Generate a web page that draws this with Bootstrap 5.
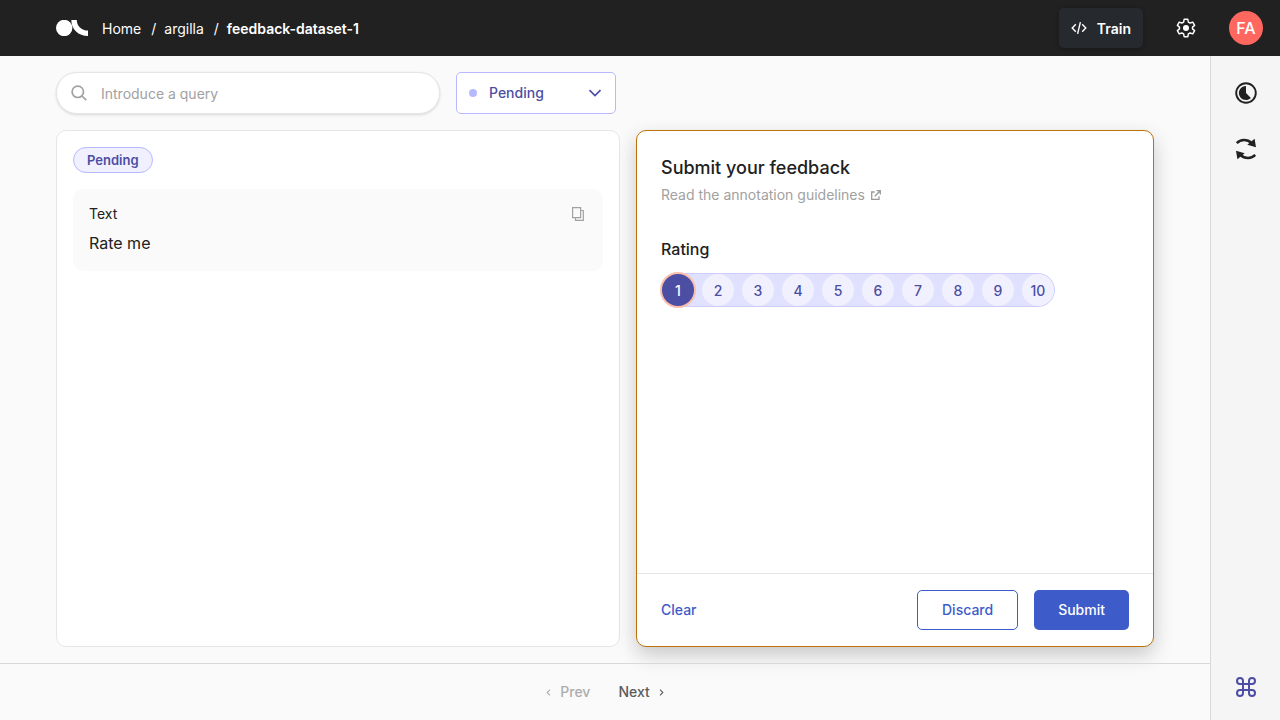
<!DOCTYPE html>
<html lang="en">
<head>
<meta charset="utf-8">
<meta name="viewport" content="width=device-width, initial-scale=1">
<title>feedback-dataset-1</title>
<link href="https://cdn.jsdelivr.net/npm/bootstrap@5.3.0/dist/css/bootstrap.min.css" rel="stylesheet">
<style>
  :root { --ink: #212121; --violet: #4c4ea3; --lilac: #b6b9ff; --blue: #3e5cc9; --line: #e6e6e6; }
  body { font-family: Inter, "Liberation Sans", sans-serif; font-size: 14px; line-height: 20px; color: var(--ink); background: #fafafa; }
  svg { display: block; flex: none; }
  .topbar { background: #212121; height: 56px; padding: 0 17px 0 56px; }
  .topbar a { color: #fff; text-decoration: none; }
  .crumbs { --bs-breadcrumb-divider-color: #fff; --bs-breadcrumb-item-padding-x: 0; margin: 2px 0 0 14px; }
  .crumbs .breadcrumb-item + .breadcrumb-item::before { padding: 0 8px 0 10px; }
  .btn-train { --bs-btn-color: #fff; --bs-btn-bg: #262a2e; --bs-btn-hover-color: #fff; --bs-btn-hover-bg: #33383d; height: 40px; font-size: 14px; line-height: 20px; font-weight: 600; padding: 0 12px; gap: 10px; border: 0; border-radius: 5px; box-shadow: 0 1px 4px rgba(0,0,0,.3); }
  .btn-train span { padding-top: 2px; }
  .avatar { width: 34px; height: 34px; background: #ff675f; font-size: 16px; font-weight: 500; }
  .side { width: 70px; background: #f5f5f5; border-left: 1px solid #d9d9d9; padding: 26px 0 22px; gap: 34px; }
  .bare { background: none; border: 0; padding: 0; }
  .work { padding: 16px 56px; gap: 16px; }
  .search { width: 384px; height: 42px; background: #fff; border: 1px solid #e6e6e6; border-radius: 21px; padding: 0 14px; gap: 14px; box-shadow: 0 1px 3px rgba(0,0,0,.14); }
  .search input { border: 0; outline: 0; background: none; font-size: 14px; min-width: 0; padding: 2px 0 0; }
  .search input::placeholder { color: #a1a1a1; opacity: 1; }
  .status { width: 160px; height: 42px; }
  .status select { appearance: none; width: 100%; height: 100%; border: 1px solid var(--lilac); border-radius: 5px; background: #fff; color: var(--violet); font-weight: 500; padding: 0 32px; }
  .status .dot { left: 13px; width: 8px; height: 8px; background: var(--lilac); }
  .status svg { right: 14px; }
  .panels { display: grid; grid-template-columns: minmax(0, 564fr) minmax(0, 518fr); gap: 16px; }
  .panel { background: #fff; border: 1px solid var(--line); border-radius: 10px; }
  .record { padding: 16px; gap: 16px; }
  .state { color: var(--violet); background: #f0f0ff; border: 1px solid var(--lilac); font-size: 13px; font-weight: 600; line-height: 24px; padding: 0 13px; }
  .field { background: #fafafa; border-radius: 10px; padding: 15px 16px 16px; }
  .field p { font-size: 16px; line-height: 24px; margin: 7px 0 0; }
  .field .bare { padding-right: 3px; }
  .form { border-color: #bb720a; box-shadow: 0 8px 20px 0 rgba(0,0,0,.2); }
  .form h1 { font-size: 18px; line-height: 26px; font-weight: 500; margin: 0 0 4px; }
  .guide { color: #a1a1a1; text-decoration: none; gap: 6px; }
  .form legend { font-size: 16px; line-height: 20px; font-weight: 500; margin: 34px 0 14px; }
  .scale { background: #e0e1ff; border: 1px solid #cdcdff; border-radius: 17px; gap: 8px; }
  .scale label { width: 32px; height: 32px; border-radius: 50%; background: #f0f0ff; color: var(--violet); font-weight: 500; line-height: 34px; text-align: center; cursor: pointer; }
  .scale .btn-check:checked + label { background: var(--violet); color: #fff; box-shadow: 0 0 0 2px #f9bfac; }
  .actions { border-top: 1px solid var(--line); padding: 16px 24px; gap: 16px; }
  .actions .btn { --bs-btn-border-color: var(--blue); --bs-btn-color: var(--blue); height: 40px; font-size: 14px; line-height: 20px; font-weight: 500; padding: 0 24px; border-radius: 5px; }
  .actions .btn-send { --bs-btn-bg: var(--blue); --bs-btn-color: #fff; border: 0; }
  .clear { color: var(--blue); font-weight: 500; }
  .pager { border-top: 1px solid #d9d9d9; height: 57px; gap: 28px; font-weight: 500; color: #5c5c5c; }
  .pager button { color: inherit; gap: 9px; font-weight: 500; }
  .pager button:disabled { color: #adadad; }
</style>
</head>
<body class="d-flex flex-column min-vh-100">
<header class="topbar d-flex align-items-center">
  <a href="#" aria-label="Argilla home"><svg width="32" height="16" viewBox="0 0 32 16" fill="#fff"><circle cx="8.200" cy="8" r="8.200"/><path d="M15.300 0h5.500c0 6 4.700 10.600 11.200 10.600V16C22.500 16 15.300 9.500 15.300 0z"/></svg></a>
  <nav aria-label="Breadcrumb" class="me-auto">
    <ol class="breadcrumb crumbs">
      <li class="breadcrumb-item"><a href="#">Home</a></li>
      <li class="breadcrumb-item"><a href="#">argilla</a></li>
      <li class="breadcrumb-item"><a href="#" class="fw-semibold" aria-current="page">feedback-dataset-1</a></li>
    </ol>
  </nav>
  <button type="button" class="btn btn-train d-flex align-items-center">
    <svg width="16" height="16" viewBox="0 0 16 16" fill="none" stroke="#fff" stroke-width="1.400"><path d="M4.800 4.200 1.200 8l3.600 3.800M11.200 4.200 14.800 8l-3.600 3.800M9.400 2.200 6.600 13.800"/></svg>
    <span>Train</span>
  </button>
  <a href="#" class="mx-4 px-2" aria-label="Settings"><svg width="22" height="22" viewBox="0 0 24 24" fill="none" stroke="#fff" stroke-width="1.600" stroke-linejoin="round"><path d="M10 2.500h4l.6 3 1.900 1.100 2.900-1 2 3.500-2.300 2v1.800l2.300 2-2 3.500-2.900-1-1.900 1.100-.6 3h-4l-.6-3-1.900-1.100-2.900 1-2-3.500 2.300-2v-1.800l-2.300-2 2-3.500 2.900 1 1.900-1.100z"/><circle cx="12" cy="12" r="2.500" fill="#fff"/></svg></a>
  <a href="#" class="avatar rounded-circle d-flex align-items-center justify-content-center">FA</a>
</header>
<div class="d-flex flex-grow-1">
  <div class="d-flex flex-column flex-grow-1">
    <main class="work d-flex flex-column flex-grow-1">
      <div class="d-flex gap-3">
        <label class="search d-flex align-items-center">
          <svg width="16" height="16" viewBox="0 0 16 16" fill="none" stroke="#a1a1a1" stroke-width="1.700"><circle cx="6.800" cy="6.800" r="5.700"/><path d="m11 11 4.200 4.200"/></svg>
          <input type="text" class="flex-grow-1" placeholder="Introduce a query" aria-label="Search">
        </label>
        <div class="status position-relative d-flex align-items-center">
          <select aria-label="Status"><option>Pending</option><option>Submitted</option><option>Discarded</option></select>
          <span class="dot position-absolute rounded-circle pe-none"></span>
          <svg class="position-absolute pe-none" width="14" height="8" viewBox="0 0 14 8" fill="none" stroke="#4c4ea3" stroke-width="1.700"><path d="m1.500 1.200 5.500 5.300 5.500-5.300"/></svg>
        </div>
      </div>
      <div class="panels flex-grow-1">
        <section class="panel record d-flex flex-column">
          <span class="state rounded-pill align-self-start">Pending</span>
          <div class="field">
            <div class="d-flex justify-content-between align-items-center"><span>Text</span>
              <button type="button" class="bare" aria-label="Copy"><svg width="12" height="14" viewBox="0 0 12 14" fill="none" stroke="#a1a1a1" stroke-width="1.200"><path d="M.6.600h8v10h-8zM9 3.500h2.300v9.900H3.500V11"/></svg></button>
            </div>
            <p>Rate me</p>
          </div>
        </section>
        <form class="panel form d-flex flex-column">
          <div class="p-4 flex-grow-1">
            <h1>Submit your feedback</h1>
            <a href="#" class="guide d-inline-flex align-items-center">Read the annotation guidelines
              <svg width="10" height="10" viewBox="0 0 10 10" fill="none" stroke="#999" stroke-width="1.300"><path d="M3.700 2H.700v7.300H8V6.300M5.500.700h3.800v3.800M9 1 3.800 6.200"/></svg></a>
            <fieldset>
              <legend>Rating</legend>
              <div class="scale d-inline-flex">
                <input class="btn-check" type="radio" name="rating" id="r1" checked><label for="r1">1</label>
                <input class="btn-check" type="radio" name="rating" id="r2"><label for="r2">2</label>
                <input class="btn-check" type="radio" name="rating" id="r3"><label for="r3">3</label>
                <input class="btn-check" type="radio" name="rating" id="r4"><label for="r4">4</label>
                <input class="btn-check" type="radio" name="rating" id="r5"><label for="r5">5</label>
                <input class="btn-check" type="radio" name="rating" id="r6"><label for="r6">6</label>
                <input class="btn-check" type="radio" name="rating" id="r7"><label for="r7">7</label>
                <input class="btn-check" type="radio" name="rating" id="r8"><label for="r8">8</label>
                <input class="btn-check" type="radio" name="rating" id="r9"><label for="r9">9</label>
                <input class="btn-check" type="radio" name="rating" id="r10"><label for="r10">10</label>
              </div>
            </fieldset>
          </div>
          <div class="actions d-flex align-items-center">
            <button type="reset" class="bare clear me-auto">Clear</button>
            <button type="button" class="btn">Discard</button>
            <button type="submit" class="btn btn-send">Submit</button>
          </div>
        </form>
      </div>
    </main>
    <footer class="pager d-flex align-items-center justify-content-center">
      <button type="button" class="bare d-flex align-items-center" disabled><svg width="5" height="7" viewBox="0 0 5 7" fill="none" stroke="currentColor" stroke-width="1.100"><path d="M4 .7 1.200 3.500 4 6.300"/></svg>Prev</button>
      <button type="button" class="bare d-flex align-items-center">Next<svg width="5" height="7" viewBox="0 0 5 7" fill="none" stroke="currentColor" stroke-width="1.100"><path d="M1 .7 3.800 3.500 1 6.300"/></svg></button>
    </footer>
  </div>
  <aside class="side d-flex flex-column align-items-center flex-shrink-0">
    <button type="button" class="bare" aria-label="Progress"><svg width="22" height="22" viewBox="0 0 22 22"><circle cx="11" cy="11" r="9.800" fill="none" stroke="#212121" stroke-width="1.900"/><path d="M11 4v7l4.900 4.900A7 7 0 1 1 11 4z" fill="#212121"/></svg></button>
    <button type="button" class="bare" aria-label="Refresh"><svg width="22" height="22" viewBox="0 0 22 22"><g fill="none" stroke="#212121" stroke-width="2.500"><path d="M1.800 5.200C5.500 1.200 12 .8 16.500 5"/><path d="M20.200 16.800c-3.700 4-10.200 4.400-14.700.2"/></g><path d="m19.600.700 1.400 8.500-8.700-2.400zM2.400 21.300 1 12.800l8.700 2.400z" fill="#212121"/></svg></button>
    <button type="button" class="bare mt-auto" aria-label="Shortcuts"><svg width="22" height="22" viewBox="0 0 22 22" fill="none" stroke="#4c4ea3" stroke-width="2"><path d="M8 8v6M14 8v6M8 8h6M8 14h6M8 8H5a3 3 0 1 1 3-3zM14 8V5a3 3 0 1 1 3 3zM8 14v3a3 3 0 1 1-3-3zM14 14h3a3 3 0 1 1-3 3z"/></svg></button>
  </aside>
</div>
<script src="https://cdn.jsdelivr.net/npm/bootstrap@5.3.0/dist/js/bootstrap.bundle.min.js"></script>
</body>
</html>
